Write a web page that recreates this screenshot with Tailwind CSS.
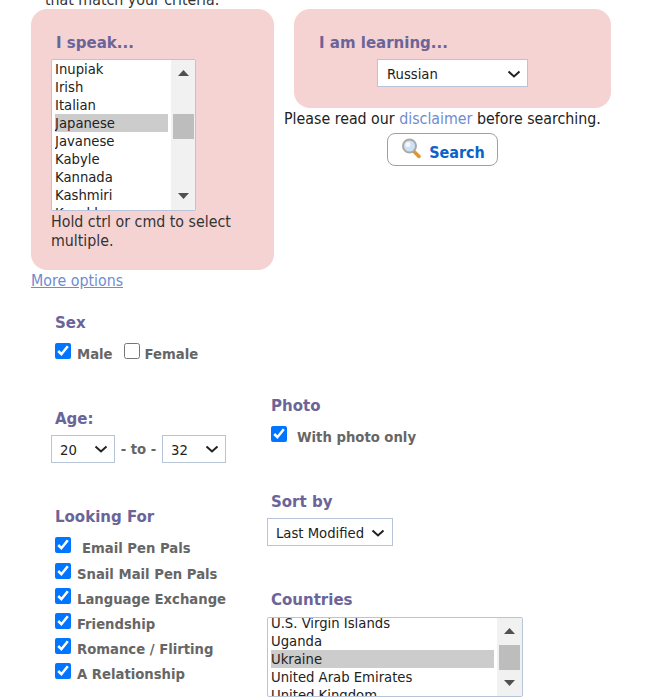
<!DOCTYPE html>
<html lang="en">
<head>
<title>Search</title>
<meta name="viewport" content="width=device-width, initial-scale=1" />
<script src="https://cdn.jsdelivr.net/npm/@tailwindcss/browser@4"></script>
</head>

<body class="bg-white h-[700px] overflow-hidden font-['DejaVu_Sans_Condensed','Noto_Sans',sans-serif] text-[15.8px] text-[#222]">
<main class="w-[651px] pl-[31px] -mt-[9px]">
  <p class="pl-[14px] h-[18px] leading-[18px] text-[#333]">that match your criteria.</p>

  <section class="flex items-start gap-[20px]">
    <div class="w-[243px] h-[261px] bg-[#f5d3d3] rounded-[16px] pt-[24px] pl-[20px]">
      <h2 class="pl-[5px] h-[20px] leading-[20px] font-['DejaVu_Sans',sans-serif] font-bold text-[15px] text-[#6b6499]">I speak...</h2>
      <div class="mt-[6px] w-[145px] h-[152px] flex bg-white border border-[#b8c4d8] rounded-[2px] overflow-hidden">
        <ul class="w-[115px] ml-[3px] text-[14.7px] leading-[18px] h-full overflow-hidden">
          <li>Inupiak</li>
          <li>Irish</li>
          <li>Italian</li>
          <li class="bg-[#cccccc]">Japanese</li>
          <li>Javanese</li>
          <li>Kabyle</li>
          <li>Kannada</li>
          <li>Kashmiri</li>
          <li>Kazakh</li>
        </ul>
        <div class="relative w-[25px] ml-[3px] bg-[#f1f1f1]">
          <svg class="absolute left-[7px] top-[10px]" width="11" height="7" viewBox="0 0 11 7"><path d="M5.500 0 11 6H0z" fill="#505050"/></svg>
          <div class="absolute left-[2px] top-[54px] w-[21px] h-[25px] bg-[#bdbdbd]"></div>
          <svg class="absolute left-[7px] top-[133px]" width="11" height="7" viewBox="0 0 11 7"><path d="M0 0h11L5.500 6z" fill="#505050"/></svg>
        </div>
      </div>
      <p class="w-[200px] leading-[19px] mt-[1px] text-[#333]">Hold ctrl or cmd to select multiple.</p>
    </div>

    <div class="w-[317px]">
      <div class="h-[99px] bg-[#f5d3d3] rounded-[16px] pt-[24px]">
        <h2 class="pl-[25px] h-[20px] leading-[20px] font-['DejaVu_Sans',sans-serif] font-bold text-[15px] text-[#6b6499]">I am learning...</h2>
        <div class="mt-[6px] flex justify-center">
          <div class="relative w-[151px]">
            <select class="appearance-none w-full h-[28px] pl-[9px] pt-[2px] bg-white border border-[#b8c4d8] text-[14.7px] text-[#222]">
              <option>Russian</option>
            </select>
            <svg class="absolute right-[7px] top-[11px]" width="14" height="8" viewBox="0 0 14 8"><path d="M1.500 1.500 7 6.500l5.500-5" fill="none" stroke="#222" stroke-width="2"/></svg>
          </div>
        </div>
      </div>
      <p class="mt-[1px] -ml-[10px] whitespace-nowrap leading-[20px] text-[#222]">Please read our <a href="#" class="text-[#6f8ccf]">disclaimer</a> before searching.</p>
      <div class="mt-[4px] flex justify-center -ml-[20px]">
        <button class="w-[111px] h-[33px] pt-[6px] flex items-center justify-center gap-[7px] bg-white border border-[#a0a0a0] rounded-[8px] font-bold text-[16px] text-[#0b62c8]">
          <svg class="-mt-[8px] ml-[1px]" width="21" height="21" viewBox="0 0 21 21">
            <path d="M12.500 13 18 18.500" stroke="#e0962f" stroke-width="3.500" stroke-linecap="round"/>
            <circle cx="8.500" cy="8" r="6.500" fill="#cfe2f5" stroke="#a9a9a9" stroke-width="2"/>
            <circle cx="7" cy="6.500" r="2.500" fill="#f2f8fd"/>
          </svg>
          Search
        </button>
      </div>
    </div>
  </section>

  <a href="#" class="block h-[20px] mt-[1px] leading-[20px] underline text-[#6f8ccf]">More options</a>

  <section class="pl-[24px] mt-[22px]">
    <h3 class="h-[20px] leading-[20px] font-['DejaVu_Sans',sans-serif] font-bold text-[15px] text-[#6b6499]">Sex</h3>
    <div class="mt-[10px] flex items-center h-[24px] font-bold text-[14.7px] text-[#666]">
      <input type="checkbox" checked class="w-4 h-4 -mt-[8px]">
      <span class="ml-[6px] -mt-[2px]">Male</span>
      <input type="checkbox" class="w-4 h-4 -mt-[8px] ml-[11px]">
      <span class="ml-[5px] -mt-[2px]">Female</span>
    </div>
  </section>

  <section class="flex mt-[29px]">
    <div class="w-[240px] pl-[20px] pt-[13px]">
      <h3 class="pl-[4px] h-[20px] leading-[20px] font-['DejaVu_Sans',sans-serif] font-bold text-[15px] text-[#6b6499]">Age:</h3>
      <div class="mt-[6px] flex items-center font-bold text-[14.7px] text-[#666]">
        <div class="relative w-[64px]">
          <select class="appearance-none w-full h-[28px] pl-[8px] pt-[2px] bg-white border border-[#b8c4d8] font-normal text-[14.7px] text-[#222]"><option>20</option></select>
          <svg class="absolute right-[7px] top-[10px]" width="14" height="8" viewBox="0 0 14 8"><path d="M1.500 1.500 7 6.500l5.500-5" fill="none" stroke="#222" stroke-width="2"/></svg>
        </div>
        <span class="w-[47px] text-center">- to -</span>
        <div class="relative w-[64px]">
          <select class="appearance-none w-full h-[28px] pl-[8px] pt-[2px] bg-white border border-[#b8c4d8] font-normal text-[14.7px] text-[#222]"><option>32</option></select>
          <svg class="absolute right-[7px] top-[10px]" width="14" height="8" viewBox="0 0 14 8"><path d="M1.500 1.500 7 6.500l5.500-5" fill="none" stroke="#222" stroke-width="2"/></svg>
        </div>
      </div>

      <h3 class="mt-[44px] pl-[4px] h-[20px] leading-[20px] font-['DejaVu_Sans',sans-serif] font-bold text-[15px] text-[#6b6499]">Looking For</h3>
      <ul class="mt-[8px] pl-[4px] font-bold text-[14.7px] text-[#666]">
        <li class="flex h-[26px] items-center"><input type="checkbox" checked class="w-4 h-4 -mt-[6px]"><span class="ml-[11px]">Email Pen Pals</span></li>
        <li class="flex h-[25px] items-center"><input type="checkbox" checked class="w-4 h-4 -mt-[6px]"><span class="ml-[6px] mt-[2px]">Snail Mail Pen Pals</span></li>
        <li class="flex h-[25px] items-center"><input type="checkbox" checked class="w-4 h-4 -mt-[6px]"><span class="ml-[6px] mt-[2px]">Language Exchange</span></li>
        <li class="flex h-[25px] items-center"><input type="checkbox" checked class="w-4 h-4 -mt-[6px]"><span class="ml-[6px] mt-[2px]">Friendship</span></li>
        <li class="flex h-[25px] items-center"><input type="checkbox" checked class="w-4 h-4 -mt-[6px]"><span class="ml-[6px] mt-[2px]">Romance / Flirting</span></li>
        <li class="flex h-[25px] items-center"><input type="checkbox" checked class="w-4 h-4 -mt-[6px]"><span class="ml-[6px] mt-[2px]">A Relationship</span></li>
      </ul>
    </div>

    <div class="w-[300px]">
      <h3 class="h-[20px] leading-[20px] font-['DejaVu_Sans',sans-serif] font-bold text-[15px] text-[#6b6499]">Photo</h3>
      <div class="mt-[9px] flex items-center h-[24px] font-bold text-[14.7px] text-[#666]">
        <input type="checkbox" checked class="w-4 h-4 -mt-[6px]">
        <span class="ml-[10px]">With photo only</span>
      </div>

      <h3 class="mt-[43px] h-[20px] leading-[20px] font-['DejaVu_Sans',sans-serif] font-bold text-[15px] text-[#6b6499]">Sort by</h3>
      <div class="relative mt-[6px] -ml-[4px] w-[126px]">
        <select class="appearance-none block w-full h-[28px] pl-[8px] pt-[2px] bg-white border border-[#b8c4d8] text-[14.7px] text-[#222]"><option>Last Modified</option></select>
        <svg class="absolute right-[8px] top-[11px]" width="14" height="8" viewBox="0 0 14 8"><path d="M1.500 1.500 7 6.500l5.500-5" fill="none" stroke="#222" stroke-width="2"/></svg>
      </div>

      <h3 class="mt-[44px] h-[20px] leading-[20px] font-['DejaVu_Sans',sans-serif] font-bold text-[15px] text-[#6b6499]">Countries</h3>
      <div class="mt-[7px] -ml-[4px] w-[256px] h-[80px] flex bg-white border border-[#b8c4d8] rounded-[2px] overflow-hidden">
        <div class="w-[226px] ml-[3px] h-full overflow-hidden">
          <ul class="-mt-[4px] text-[14.7px] leading-[18px]">
            <li>U.S. Virgin Islands</li>
            <li>Uganda</li>
            <li class="bg-[#cccccc]">Ukraine</li>
            <li>United Arab Emirates</li>
            <li>United Kingdom</li>
          </ul>
        </div>
        <div class="relative w-[25px] ml-[3px] bg-[#f1f1f1]">
          <svg class="absolute left-[7px] top-[10px]" width="11" height="7" viewBox="0 0 11 7"><path d="M5.500 0 11 6H0z" fill="#505050"/></svg>
          <div class="absolute left-[2px] top-[27px] w-[21px] h-[25px] bg-[#bdbdbd]"></div>
          <svg class="absolute left-[7px] top-[62px]" width="11" height="7" viewBox="0 0 11 7"><path d="M0 0h11L5.500 6z" fill="#505050"/></svg>
        </div>
      </div>
    </div>
  </section>
</main>
</body>
</html>
